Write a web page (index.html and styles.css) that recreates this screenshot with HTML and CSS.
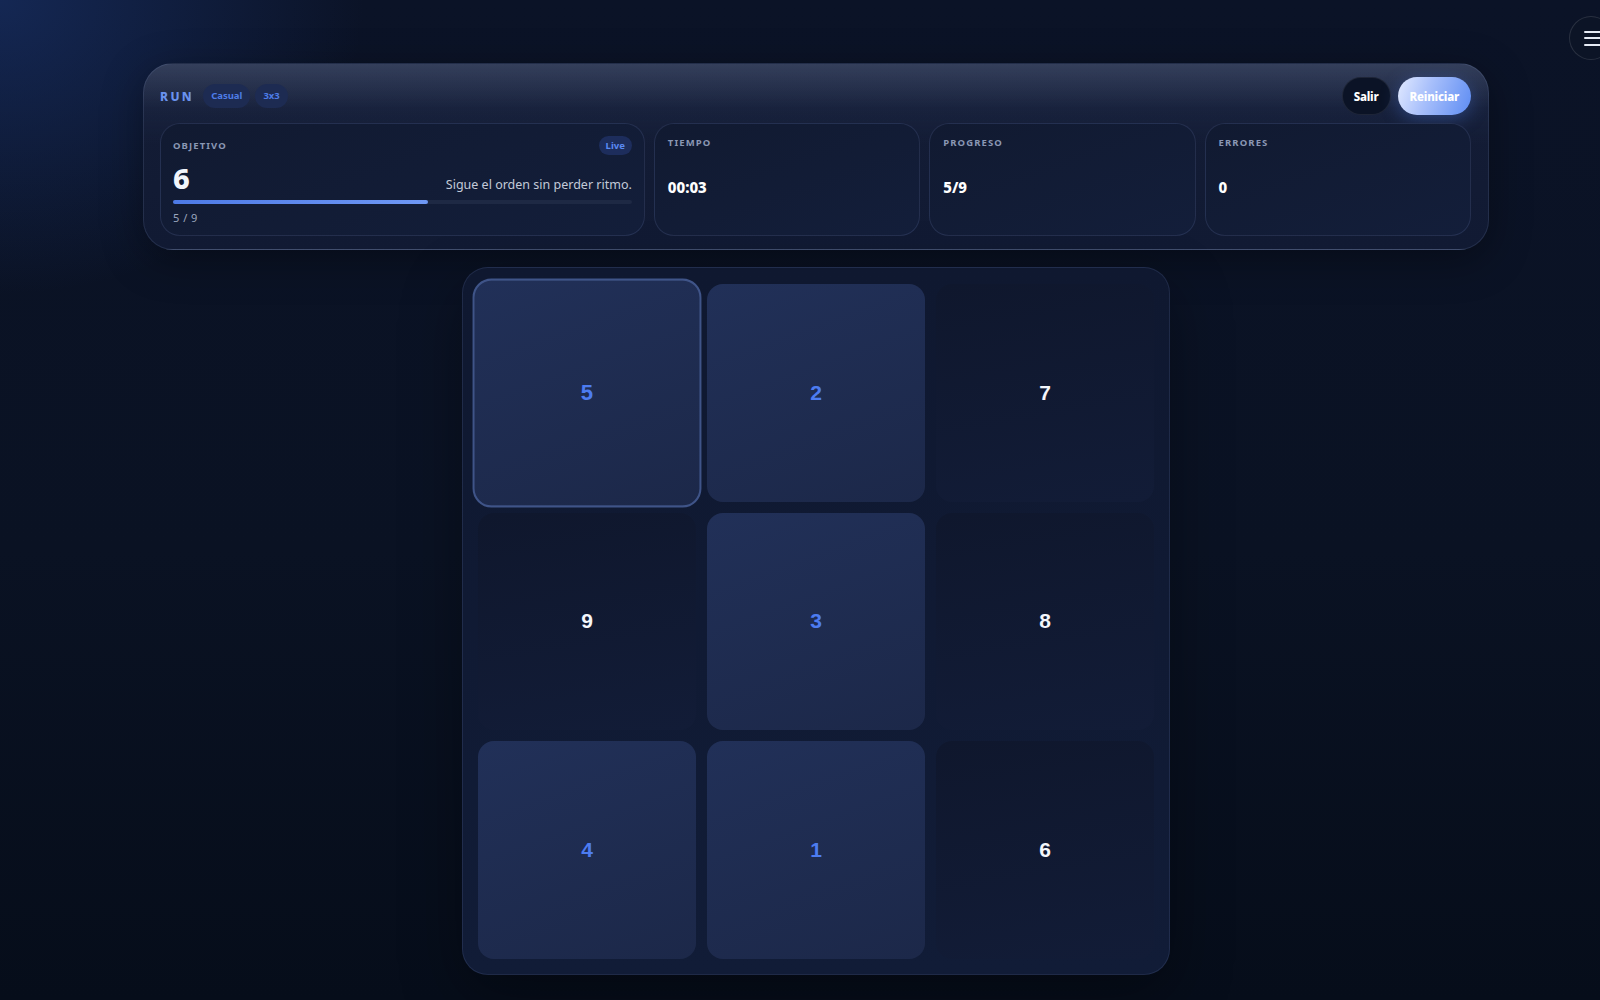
FILE: index.html
```html
<!DOCTYPE html>
<html>
    <head>
        <meta charset="utf-8">
        <link rel="stylesheet" href="styles.css">
    </head>
    <body>
        <button class='menu' aria-label='Menu'>
            <span></span><span></span><span></span>
        </button>

        <div class='app'>
            <section class='hud'>
                <div class='hud-top'>
                    <div class='tags'>
                        <span class='run'>RUN</span>
                        <span class='chip'>Casual</span>
                        <span class='chip'>3x3</span>
                    </div>
                    <div class='actions'>
                        <button class='btn ghost'>Salir</button>
                        <button class='btn primary'>Reiniciar</button>
                    </div>
                </div>

                <div class='stats'>
                    <div class='stat target'>
                        <div class='stat-head'>
                            <span class='label'>Objetivo</span>
                            <span class='live'>Live</span>
                        </div>
                        <div class='target-row'>
                            <span class='target-num'>6</span>
                            <span class='hint'>Sigue el orden sin perder ritmo.</span>
                        </div>
                        <div class='bar'><div class='fill' style='width: 55.6%'></div></div>
                        <span class='count'>5 / 9</span>
                    </div>
                    <div class='stat'>
                        <span class='label'>Tiempo</span>
                        <span class='value'>00:03</span>
                    </div>
                    <div class='stat'>
                        <span class='label'>Progreso</span>
                        <span class='value'>5/9</span>
                    </div>
                    <div class='stat'>
                        <span class='label'>Errores</span>
                        <span class='value'>0</span>
                    </div>
                </div>
            </section>

            <div class='board'>
                <button class='cell done last'>5</button>
                <button class='cell done'>2</button>
                <button class='cell'>7</button>
                <button class='cell'>9</button>
                <button class='cell done'>3</button>
                <button class='cell'>8</button>
                <button class='cell done'>4</button>
                <button class='cell done'>1</button>
                <button class='cell'>6</button>
            </div>
        </div>
    </body>
</html>
```

FILE: styles.css
```css
body {
    margin: 0;
    min-height: 1000px;
    overflow: hidden;
    font-family: 'Noto Sans', 'Open Sans', sans-serif;
    color: #f2f5fb;
    background:
        radial-gradient(ellipse 520px 420px at 0 0, rgba(28, 56, 120, 0.55), transparent 70%),
        linear-gradient(180deg, #0b1327 0%, #0a1223 55%, #060d1a 100%);
}

button {
    font-family: inherit;
    cursor: pointer;
}

.menu {
    position: fixed;
    top: 16px;
    left: 1569px;
    width: 44px;
    height: 44px;
    border-radius: 50%;
    border: 1px solid rgba(255, 255, 255, 0.12);
    background: #0c1426;
    padding: 0 0 0 14px;
    display: flex;
    flex-direction: column;
    justify-content: center;
    gap: 4.5px;
}

.menu span {
    display: block;
    width: 18px;
    height: 2px;
    border-radius: 1px;
    background: #e6ebf5;
}

.app {
    padding: 63px 0 0 32px;
}

/* ---- top panel ---- */

.hud {
    width: 1346px;
    margin: 0 auto;
    box-sizing: border-box;
    padding: 13px 17px 13px 16px;
    border-radius: 30px;
    border: 1px solid rgba(150, 170, 220, 0.14);
    background:
        linear-gradient(180deg, rgba(120, 135, 170, 0.32) 0px, rgba(60, 75, 115, 0.12) 45px, rgba(20, 30, 60, 0) 80px),
        linear-gradient(180deg, #141d36, #111a33);
    box-shadow: 0 10px 40px rgba(0, 0, 0, 0.35);
}

.hud-top {
    display: flex;
    align-items: center;
    justify-content: space-between;
    height: 38px;
}

.tags {
    display: flex;
    align-items: center;
    gap: 5px;
}

.run {
    font-size: 12px;
    font-weight: 800;
    letter-spacing: 2.4px;
    color: #6a92ee;
    margin-right: 4px;
}

.chip {
    height: 24px;
    line-height: 24px;
    padding: 0 8px;
    border-radius: 12px;
    background: #1d2b52;
    color: #4d7ce6;
    font-size: 9.5px;
    font-weight: 700;
}

.actions {
    display: flex;
    gap: 7px;
}

.btn {
    height: 38px;
    border-radius: 19px;
    font-size: 11.5px;
    font-weight: 800;
    letter-spacing: -0.2px;
    color: #fff;
    padding: 0 11px;
}

.btn.ghost {
    background: #0b1326;
    border: 1px solid rgba(255, 255, 255, 0.08);
}

.btn.primary {
    border: none;
    padding: 0 12px;
    background: linear-gradient(110deg, #e2eaff 0%, #a9c0fb 40%, #5d8cf3 100%);
    box-shadow: 0 4px 18px rgba(80, 130, 240, 0.35);
}

.stats {
    display: grid;
    grid-template-columns: 1.82fr 1fr 1fr 1fr;
    gap: 9px;
    margin-top: 8px;
}

.stat {
    height: 113px;
    box-sizing: border-box;
    padding: 12px 13px;
    border-radius: 20px;
    border: 1px solid rgba(130, 150, 210, 0.16);
    background: linear-gradient(160deg, #111a31, #131e3a);
    display: flex;
    flex-direction: column;
}

.label {
    font-size: 9.5px;
    font-weight: 700;
    letter-spacing: 1.1px;
    text-transform: uppercase;
    color: #8a97b4;
}

.value {
    margin-top: 28px;
    font-size: 15px;
    font-weight: 800;
    color: #fff;
}

.stat.target {
    padding: 12px 12px 10px 12px;
}

.stat-head {
    display: flex;
    align-items: center;
    justify-content: space-between;
}

.live {
    height: 19px;
    line-height: 19px;
    padding: 0 7px;
    border-radius: 10px;
    background: #1d2d5c;
    color: #5a89f2;
    font-size: 9.5px;
    font-weight: 700;
}

.target-row {
    display: flex;
    align-items: flex-end;
    justify-content: space-between;
    margin-top: 6px;
}

.target-num {
    font-size: 29px;
    font-weight: 800;
    line-height: 34px;
}

.hint {
    font-size: 12.5px;
    color: #c3cad8;
    padding-bottom: 2px;
}

.bar {
    height: 4px;
    border-radius: 2px;
    background: #1e2944;
    margin-top: 5px;
}

.fill {
    height: 100%;
    border-radius: 2px;
    background: linear-gradient(90deg, #4d7ae6, #6f98f5);
}

.count {
    margin-top: 6px;
    font-size: 11px;
    color: #9ba6bd;
    letter-spacing: 0.5px;
}

/* ---- board ---- */

.board {
    width: 708px;
    height: 708px;
    box-sizing: border-box;
    margin: 17px auto 0 auto;
    padding: 16px 15px 15px 15px;
    display: grid;
    grid-template-columns: repeat(3, 1fr);
    grid-template-rows: repeat(3, 1fr);
    gap: 11px;
    border-radius: 26px;
    border: 1px solid rgba(130, 150, 210, 0.15);
    background: linear-gradient(180deg, #0f1830, #111c37);
    box-shadow: 0 20px 60px rgba(0, 0, 0, 0.35);
}

.cell {
    border: none;
    border-radius: 16px;
    background: linear-gradient(170deg, #0f172d, #121c37);
    color: #f4f6fb;
    font-family: 'Liberation Sans', Arial, sans-serif;
    font-size: 21px;
    font-weight: 700;
}

.cell.done {
    color: #4d7cf0;
    background: linear-gradient(160deg, #213058, #1c2849);
}

.cell.last {
    transform: scale(1.05);
    border: 2px solid #3f5488;
    border-radius: 18px;
}
```
